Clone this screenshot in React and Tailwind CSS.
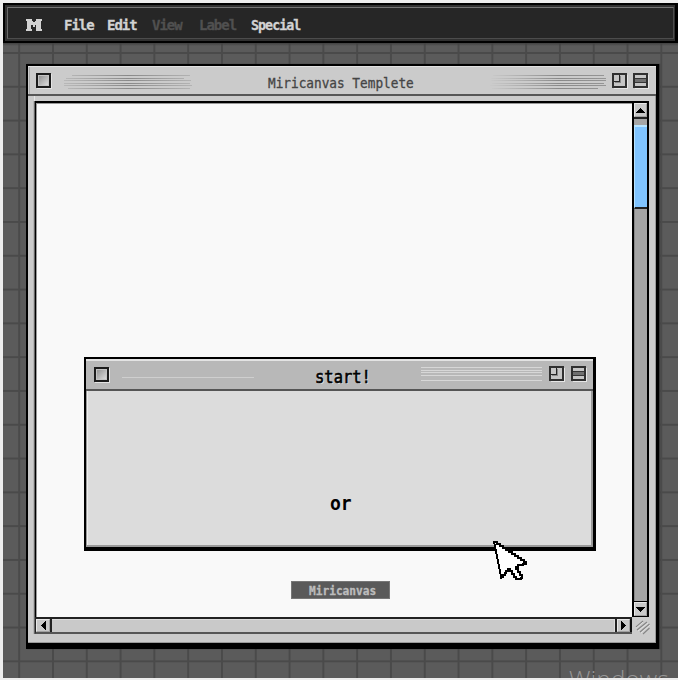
import React from "react";

const mono = "font-['DejaVu_Sans_Mono','Liberation_Mono',monospace]";

function CloseBox() {
  return (
    <div className="h-[15px] w-[15px] shrink-0 border-2 border-[#1c1c1c] bg-gradient-to-br from-[#8c8c8c] to-[#e2e2e2] shadow-[1px_1px_0_#e4e4e4] ring-inset ring-1 ring-[#c4c4c4]" />
  );
}

function ZoomBox() {
  return (
    <svg className="h-[16px] w-[16px] shrink-0" viewBox="0 0 16 16" shapeRendering="crispEdges">
      <path d="M2 15.5H15.5V2" fill="none" stroke="#e6e6e6" />
      <rect x="1" y="1" width="13" height="13" fill="#c6c6c6" stroke="#303030" strokeWidth="2" />
      <path d="M2 8.5H7.5V2" fill="none" stroke="#262626" strokeWidth="1" />
      <path d="M3 9.5H8.5V3" fill="none" stroke="#8a8a8a" strokeWidth="1" />
    </svg>
  );
}

function ShadeBox() {
  return (
    <svg className="h-[16px] w-[16px] shrink-0" viewBox="0 0 16 16" shapeRendering="crispEdges">
      <path d="M2 15.5H15.5V2" fill="none" stroke="#e6e6e6" />
      <rect x="1" y="1" width="13" height="13" fill="#c6c6c6" stroke="#303030" strokeWidth="2" />
      <rect x="2" y="5" width="11" height="5" fill="#707070" />
      <path d="M2 5.5H13M2 9.5H13" stroke="#363636" />
    </svg>
  );
}

function Arrow({ d, className }) {
  return (
    <div className={"flex shrink-0 items-center justify-center bg-[#c8c8c8] border border-[#e8e8e8] border-r-[#a0a0a0] border-b-[#a0a0a0] " + className}>
      <svg className="h-[9px] w-[9px] shrink-0" viewBox="0 0 9 9" shapeRendering="crispEdges">
        <path d={d} fill="#000" />
      </svg>
    </div>
  );
}

function MenuBar() {
  return (
    <div className="h-10 shrink-0 border-2 border-r-[3px] border-black bg-[#303030] p-[2px] pr-[1px]">
      <div className={"flex h-full items-center border border-[#4c4c4c] border-t-[#737373] border-l-[#686868] bg-[#262626] pt-[3px] text-[14px] font-bold leading-4 tracking-[-1px] text-[#d2d2d2] [-webkit-text-stroke:0.3px_currentColor] " + mono}>
        <svg className="ml-[18px] h-3 w-4 shrink-0" viewBox="0 0 16 12" shapeRendering="crispEdges">
          <path d="M0 0H6V2H7V3H9V2H10V0H16V2H15V10H16V12H10V6H9V8H7V6H5V10H6V12H0V10H1V2H0Z" fill="#d2d2d2" />
        </svg>
        <span className="ml-[22px] w-[43px] shrink-0">File</span>
        <span className="w-[45px] shrink-0">Edit</span>
        <span className="w-[47px] shrink-0 text-[#505050]">View</span>
        <span className="w-[51.5px] shrink-0 text-[#505050]">Label</span>
        <span className="origin-left scale-x-[0.95]">Special</span>
      </div>
    </div>
  );
}

function MainWindow() {
  return (
    <div className="absolute left-[26px] top-[64px] flex h-[585px] w-[633px] flex-col border-2 border-r-[3px] border-b-[6px] border-black bg-[#cbcbcb] shadow-[1px_0_1px_#383838]">
      <div className="flex h-[30px] shrink-0 flex-col border-b-2 border-[#565656] border-t border-t-[#e2e2e2]">
        <div className="ml-[1px] flex h-[27px] items-center border-l border-[#aaa] pl-[6px] pr-[7px]">
          <CloseBox />
          <svg className="ml-[13px] mt-[2px] h-4 w-32 shrink-0" viewBox="0 0 128 16">
            <defs>
              <linearGradient id="fadeEnds" x1="0" x2="128" gradientUnits="userSpaceOnUse">
                <stop offset="0" stopColor="#888" stopOpacity=".35" />
                <stop offset=".5" stopColor="#777" />
                <stop offset="1" stopColor="#888" stopOpacity=".45" />
              </linearGradient>
            </defs>
            <path d="M8 1.5H126M2 4.5H120M0 6.5H127M0 9.5H126M0 11.5H128M4 14.5H126" stroke="url(#fadeEnds)" strokeWidth=".8" />
          </svg>
          <div className={"ml-[76px] w-[146px] shrink-0 whitespace-nowrap pt-[5px] text-[14px] leading-4 text-[#454545] " + mono}>
            <span className="inline-block origin-left scale-x-[0.91] [-webkit-text-stroke:0.3px_#454545]">Miricanvas Templete</span>
          </div>
          <svg className="ml-auto mr-[6px] mt-[2px] h-4 w-[118px] shrink-0" viewBox="0 0 118 16">
            <defs>
              <linearGradient id="fadeLeft" x1="0" x2="118" gradientUnits="userSpaceOnUse">
                <stop offset="0" stopColor="#888" stopOpacity="0" />
                <stop offset=".6" stopColor="#777" />
                <stop offset="1" stopColor="#777" stopOpacity=".8" />
              </linearGradient>
            </defs>
            <path d="M5 1.5H116M3 4.5H118M3 6.5H118M4 9.5H116M2 11.5H118M4 14.5H110" stroke="url(#fadeLeft)" strokeWidth=".8" />
          </svg>
          <div className="flex gap-[5px]">
            <ZoomBox />
            <ShadeBox />
          </div>
        </div>
      </div>
      <div className="flex min-h-0 grow flex-col border-b border-r border-[#999] pl-[6px] pr-[5px]">
        <div className="h-[5px] shrink-0 border-l border-[#e5e5e5]" />
        <div className="flex h-[533px] shrink-0 flex-col border-l-[1px] border-[#666] shadow-[-1px_0_0_#b5b5b5]">
          <div className="flex h-[516px] shrink-0">
            <div className="grow border-l border-t-2 border-black">
              <div className="h-full border-l border-t border-[#999] bg-[#f9f9f9]" />
            </div>
            <div className="mr-[1px] flex w-[17px] shrink-0 flex-col border-x-2 border-t-2 border-black bg-[#a5a5a5]">
              <Arrow className="h-[14px]" d="M4 2h1v1h1v1h1v1h1v1h1v1H0V6h1V5h1V4h1V3h1z" />
              <div className="h-[8px] shrink-0 border-t-2 border-[#222] bg-[#a5a5a5]" />
              <div className="h-[84px] shrink-0 border-b-2 border-l border-t-2 border-b-[#222] border-l-[#b8e4ff] border-t-[#b8e4ff] bg-[#80c4ff]" />
              <div className="grow border-l border-[#878787]" />
              <div className="h-[1px] shrink-0 bg-black" />
              <Arrow className="h-[14px]" d="M0 2h9v1H8v1H7v1H6v1H5v1H4V6H3V5H2V4H1V3H0z" />
              <div className="h-[1px] shrink-0 bg-black" />
            </div>
          </div>
          <div className="flex h-[17px] shrink-0">
            <div className="flex grow border-y-2 border-l border-[#222] border-b-[#555]">
              <Arrow className="w-[14px]" d="M6 0h1v9H6V8H5V7H4V6H3V5H2V4h1V3h1V2h1V1h1z" />
              <div className="w-[2px] shrink-0 bg-[#222]" />
              <div className="grow border-r border-t border-[#dcdcdc] bg-[#c9c9c9]" />
              <div className="w-[2px] shrink-0 bg-[#222]" />
              <Arrow className="w-[13px]" d="M2 0h1v1h1v1h1v1h1v1h1v1H6v1H5v1H4v1H3v1H2z" />
              <div className="w-[2px] shrink-0 bg-[#111]" />
            </div>
            <svg className="ml-[2px] mt-[2px] h-[16px] w-[16px] shrink-0" viewBox="0 0 16 16">
              <path d="M2 8L9 2M3 11L13 3M6 13L15.5 5M9 15L15.5 9" stroke="#858585" strokeWidth="1.1" />
              <path d="M2 9.2L9 3.2M4 12L14 4M7 14L16 6" stroke="#e6e6e6" strokeWidth=".8" />
            </svg>
          </div>
        </div>
      </div>
    </div>
  );
}

function StartDialog() {
  return (
    <div className="absolute left-[84px] top-[357px] flex h-[194px] w-[512px] flex-col border-2 border-b-4 border-r-[3px] border-black bg-[#dcdcdc]">
      <div className="flex h-[32px] shrink-0 items-center border-b-2 border-t-2 border-b-[#555] border-t-[#e3e3e3] bg-[#b8b8b8] pb-[2px] pl-[8px] pr-[6px]">
        <CloseBox />
        <div className="ml-[13px] mt-[6px] h-px w-[132px] shrink-0 bg-[#cfcfcf]" />
        <div className={"ml-[61px] w-[57px] shrink-0 whitespace-nowrap pt-[5px] text-[17px] leading-5 text-black " + mono}>
          <span className="inline-block origin-left scale-x-[0.91] [text-shadow:1px_1px_0_#e5e5e5] [-webkit-text-stroke:0.6px_#000]">start!</span>
        </div>
        <svg className="ml-auto mr-[7px] h-4 w-[121px] shrink-0" viewBox="0 0 121 16" shapeRendering="crispEdges">
          <path d="M0 1.5H121M0 4.5H121M0 6.5H121M0 9.5H121M0 14.5H121" stroke="#d7d7d7" />
        </svg>
        <div className="flex gap-[6px]">
          <ZoomBox />
          <ShadeBox />
        </div>
      </div>
      <div className="flex grow items-start justify-center border-b-2 border-l border-r-2 border-[#999]">
        <div className="flex h-full w-full items-start border-l border-[#eee]">
          <span className={"ml-[242px] mt-[100px] inline-block origin-left scale-x-[0.95] text-[19px] font-bold leading-6 text-black " + mono}>or</span>
        </div>
      </div>
    </div>
  );
}

function Pointer() {
  return (
    <svg className="absolute left-[492px] top-[539px] h-[44px] w-[36px]" viewBox="0 0 36 44" shapeRendering="crispEdges">
      <path d="M2 2L9.5 40L17.5 31L20 32L24 41L30 39L25.5 29L34 25Z" fill="#fff" />
      <path d="M2 2L9.5 40" stroke="#000" strokeWidth="2" />
      <path d="M2 3H5V5H8V7H11V9H14V11H17V13H20V15H23V17H26V19H29V21H32V23H34V25H31V26H26V28H24V30H26V33H28V36H30V39H29V40H24V38H22V35H20V32H18V30H16V32H14V34H13V36H11V38H9V40" fill="none" stroke="#000" strokeWidth="1.4" />
    </svg>
  );
}

export default function App() {
  return (
    <div className="relative h-[680px] w-[678px] overflow-hidden bg-[#ededed] pb-[2px] pl-[3px] pt-[3px]">
      <div className="flex h-full flex-col bg-[#5b5b5b] bg-[linear-gradient(90deg,#4a4a4a_1.7px,transparent_1.7px),linear-gradient(#4a4a4a_1.7px,transparent_1.7px)] bg-[length:33.8px_33.8px] bg-[position:15.2px_15.2px]">
        <MenuBar />
        <div className="h-[3px] shrink-0 bg-gradient-to-b from-[#404040] to-transparent" />
      </div>
      <MainWindow />
      <StartDialog />
      <div className={"absolute left-[291px] top-[581px] h-[18px] w-[99px] border border-[#777] bg-[#5a5a5a] pl-[17px] text-[12px] font-bold leading-[18px] text-[#bcbcbc] [-webkit-text-stroke:0.3px_#bcbcbc] " + mono}>
        <span className="inline-block origin-left scale-x-[0.93]">Miricanvas</span>
      </div>
      <Pointer />
      <div className="absolute bottom-[2px] left-[569px] h-[8px] w-[109px] overflow-hidden font-['Open_Sans','Noto_Sans',sans-serif] text-[24px] leading-[24px] tracking-[0.3px] text-[#969696]">
        <div className="mt-[-3px] font-light">Windows</div>
      </div>
    </div>
  );
}
